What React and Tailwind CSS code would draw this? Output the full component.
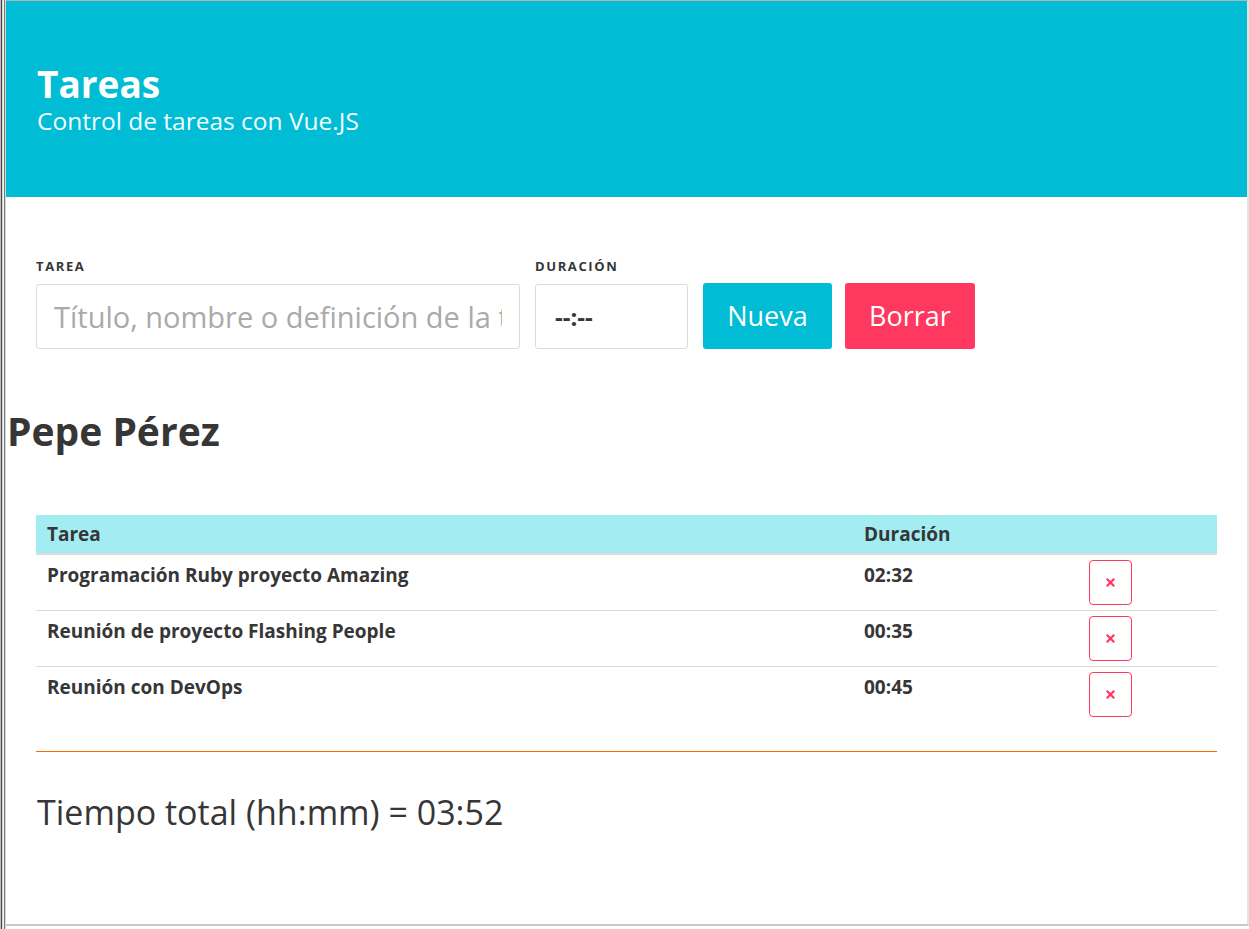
export default function App() {
  const rows = [
    ["Programación Ruby proyecto Amazing", "02:32"],
    ["Reunión de proyecto Flashing People", "00:35"],
    ["Reunión con DevOps", "00:45"],
  ];
  const font = { fontFamily: '"Open Sans", "Noto Sans", sans-serif' };
  return (
    <div className="w-[1249px] h-[929px] flex bg-white overflow-hidden" style={font}>
      {/* window frame left */}
      <div className="flex h-full">
        <div className="w-px bg-[#bdbdbd]" />
        <div className="w-px bg-[#4a4a4a]" />
        <div className="w-px bg-[#d6d6d6]" />
        <div className="w-px bg-[#f4f4f4]" />
        <div className="w-px bg-[#7a7a7a]" />
        <div className="w-px bg-[#d9d9d9]" />
      </div>
      <div className="flex-1 flex flex-col border-t border-[#b5b5b5] h-[926px] border-b-[2px] border-b-[#c8c8c8] border-r-[2px] border-r-[#e4e4e4]">
        <header className="h-[196px] bg-[#00bcd4] pl-[31px] flex flex-col justify-center text-white">
          <h1 className="text-[37px] font-bold leading-[40px] mt-[2px]">Tareas</h1>
          <p className="text-[24.5px] font-normal leading-[30px] mt-[2px] text-[#f2fdff]">Control de tareas con Vue.JS</p>
        </header>
        <main className="flex-1 flex flex-col">
          <div className="px-[30px] pt-[61px] flex items-end gap-[15px]">
            <div className="flex flex-col">
              <label className="text-[13px] font-bold tracking-[1.6px] text-[#363636] leading-[16px] mb-[10px]">TAREA</label>
              <input
                readOnly
                placeholder="Título, nombre o definición de la tarea"
                className="w-[484px] h-[65px] border border-[#dbdbdb] rounded-[3px] px-[17px] text-[29px] placeholder:text-[#aaaaaa] outline-none"
                style={font}
              />
            </div>
            <div className="flex flex-col">
              <label className="text-[13px] font-bold tracking-[1.6px] text-[#363636] leading-[16px] mb-[10px]">DURACIÓN</label>
              <input
                readOnly
                value="--:--"
                className="w-[153px] h-[65px] border border-[#dbdbdb] rounded-[3px] px-[19px] text-[24px] font-bold text-[#363636] outline-none"
                style={font}
              />
            </div>
            <button className="w-[129px] h-[66px] bg-[#00bcd4] rounded-[3px] text-white text-[27px]">Nueva</button>
            <button className="ml-[-2px] w-[130px] h-[66px] bg-[#ff3860] rounded-[3px] text-white text-[27px]">Borrar</button>
          </div>
          <h2 className="pl-px mt-[56px] text-[39px] font-bold text-[#363636] leading-[52px]">Pepe Pérez</h2>
          <div className="px-[30px] mt-[58px]">
            <div className="flex h-[40px] items-center bg-[#a3ecf2] border-b-[2px] border-[#dbdbdb] text-[19px] font-bold text-[#363636]">
              <div className="w-[828px] pl-[11px]">Tarea</div>
              <div className="flex-1">Duración</div>
            </div>
            {rows.map(([t, d], i) => (
              <div key={i} className={`flex h-[56px] text-[19px] font-bold text-[#363636] ${i < rows.length - 1 ? "border-b border-[#dbdbdb]" : ""}`}>
                <div className="w-[828px] pl-[11px] pt-[6px]">{t}</div>
                <div className="w-[225px] pt-[6px]">{d}</div>
                <div className="pt-[5px]">
                  <button className="w-[43px] h-[45px] border border-[#ff3860] rounded-[4px] flex items-center justify-center">
                    <svg width="9" height="9" viewBox="0 0 9 9">
                      <path d="M1.5 1.5 L7.5 7.5 M7.5 1.5 L1.5 7.5" stroke="#ff3860" strokeWidth="2.2" strokeLinecap="square" />
                    </svg>
                  </button>
                </div>
              </div>
            ))}
            <div className="mt-[28px] border-t border-t-orange-500" />
          </div>
          <div className="px-[31px] mt-[37px] text-[34px] text-[#363636] leading-[46px]">Tiempo total (hh:mm) = 03:52</div>
        </main>
      </div>
    </div>
  );
}
